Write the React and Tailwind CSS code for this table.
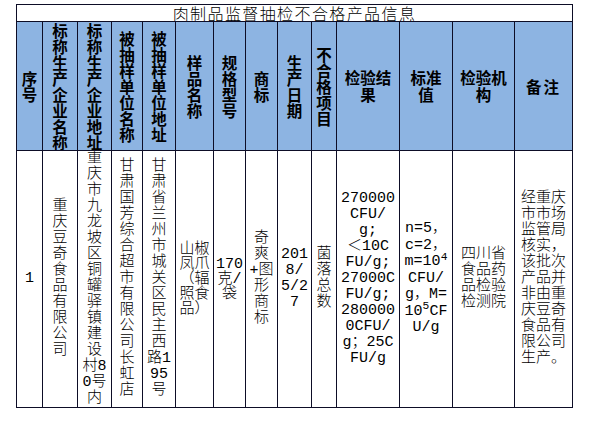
import React from "react";

const HEAD = "font-['Noto_Sans_CJK_SC',sans-serif] font-bold text-[15.5px] leading-[16px] text-black";
const BODY = "font-['Liberation_Mono','Noto_Sans_CJK_SC',monospace] font-light text-[15px] leading-[16px] text-black";

function Cell({ lines, head, lh = "h-[16px]", extra = "" }) {
  return (
    <div
      className={
        "flex flex-col items-center justify-center overflow-hidden border-r border-b border-[#0d0d26] " +
        (head ? "bg-[#8db4e2] " + HEAD : "bg-white " + BODY) +
        " " +
        extra
      }
    >
      {lines.map((l, i) => (
        <div key={i} className={"whitespace-nowrap text-center " + lh}>
          {l}
        </div>
      ))}
    </div>
  );
}

const chars = (s) => s.split("");

export default function App() {
  return (
    <div className="w-[594px] h-[426px] bg-white pt-[4px] pl-[16px]">
      <div className="grid w-[557px] grid-cols-[26px_35px_34px_31px_33px_38px_32px_32px_34px_25px_63px_53px_62px_58px] grid-rows-[17px_129px_257px] border-l border-t border-[#0d0d26]">
        <div className="col-span-14 flex items-center justify-center overflow-hidden border-r border-b border-[#0d0d26] bg-white font-['Noto_Sans_CJK_SC',sans-serif] font-light text-[16px] leading-[17px] tracking-[1.4px] text-black">
          肉制品监督抽检不合格产品信息
        </div>

        <Cell head lines={chars("序号")} />
        <Cell head lines={chars("标称生产企业名称")} />
        <Cell head lines={chars("标称生产企业地址")} />
        <Cell head lines={chars("被抽样单位名称")} />
        <Cell head lines={chars("被抽样单位地址")} />
        <Cell head lines={chars("样品名称")} />
        <Cell head lines={chars("规格型号")} />
        <Cell head lines={chars("商标")} />
        <Cell head lines={chars("生产日期")} />
        <Cell head lines={chars("不合格项目")} />
        <Cell head lines={["检验结", "果"]} lh="h-[17px]" />
        <Cell head lines={["标准", "值"]} lh="h-[17px]" />
        <Cell head lines={["检验机", "构"]} lh="h-[17px]" />
        <Cell head lines={["备注"]} extra="tracking-[2px]" />

        <Cell lines={["1"]} />
        <Cell lines={chars("重庆豆奇食品有限公司")} />
        <Cell
          lines={[
            "重", "庆", "市", "九", "龙", "坡", "区", "铜", "罐", "驿", "镇", "建", "设", "村8", "0号", "内",
          ]}
        />
        <Cell lines={chars("甘肃国芳综合超市有限公司长虹店")} />
        <Cell
          lines={[
            "甘", "肃", "省", "兰", "州", "市", "城", "关", "区", "民", "主", "西", "路1", "95", "号",
          ]}
        />
        <Cell lines={["山椒", "凤爪", "（辐", "照食", "品）"]} lh="h-[15px]" />
        <Cell lines={["170", "克/", "袋"]} lh="h-[15px]" />
        <Cell lines={["奇", "爽", "+图", "形", "商", "标"]} />
        <Cell lines={["201", "8/", "5/2", "7"]} />
        <Cell lines={chars("菌落总数")} />
        <Cell
          lines={[
            "270000",
            "CFU/",
            "g;",
            "＜10C",
            "FU/g;",
            "27000C",
            "FU/g;",
            "280000",
            "0CFU/",
            "g；25C",
            "FU/g",
          ]}
        />
        <Cell
          lh="h-[16.5px]"
          lines={[
            "n=5，",
            "c=2，",
            <>m=10<sup>4</sup></>,
            "CFU/",
            "g，M=",
            <>10<sup>5</sup>CF</>,
            "U/g",
          ]}
        />
        <Cell lines={["四川省", "食品药", "品检验", "检测院"]} />
        <Cell
          lines={[
            "经重庆",
            "市市场",
            "监管局",
            "核实，",
            "该批次",
            "产品并",
            "非由重",
            "庆豆奇",
            "食品有",
            "限公司",
            "生产。",
          ]}
        />
      </div>
    </div>
  );
}
